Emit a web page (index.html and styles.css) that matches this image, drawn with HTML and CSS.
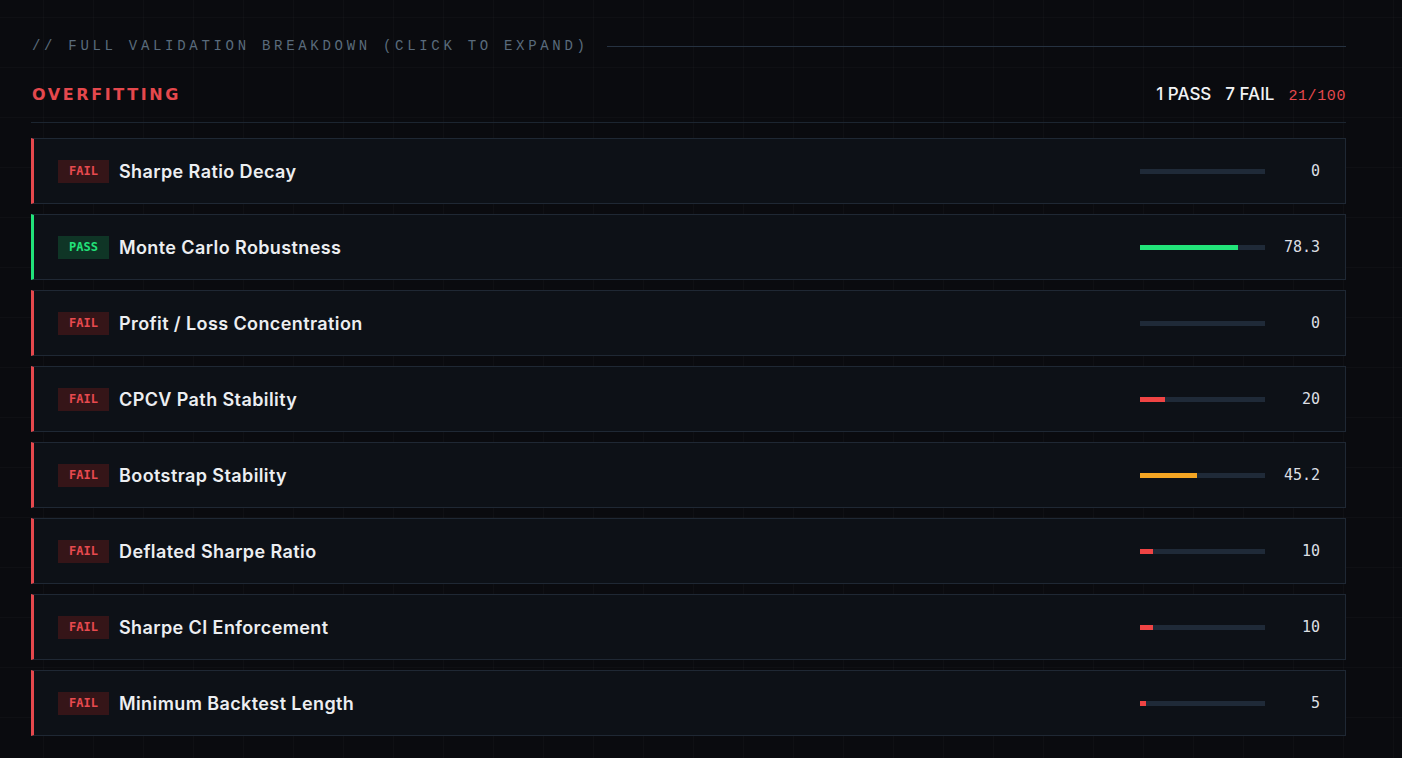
FILE: index.html
```html
<!DOCTYPE html>
<html lang="en">
<head>
    <meta charset="UTF-8">
    <meta name="viewport" content="width=device-width, initial-scale=1.0">
    <title>Validation Breakdown</title>
    <link rel="stylesheet" href="styles.css">
</head>
<body>
    <div class="page">
        <div class="breakdown-title">
            <span>// FULL VALIDATION BREAKDOWN (CLICK TO EXPAND)</span>
            <div class="rule"></div>
        </div>

        <div class="category-head">
            <h2>OVERFITTING</h2>
            <div class="tally">
                <span>1 PASS</span>
                <span>7 FAIL</span>
                <span class="score">21/100</span>
            </div>
        </div>

        <div class="checks">
            <div class="check fail">
                <span class="badge">FAIL</span>
                <span class="name">Sharpe Ratio Decay</span>
                <div class="bar"><div class="fill red" style="width: 0%"></div></div>
                <span class="value">0</span>
            </div>
            <div class="check pass">
                <span class="badge">PASS</span>
                <span class="name">Monte Carlo Robustness</span>
                <div class="bar"><div class="fill green" style="width: 78.3%"></div></div>
                <span class="value">78.3</span>
            </div>
            <div class="check fail">
                <span class="badge">FAIL</span>
                <span class="name">Profit / Loss Concentration</span>
                <div class="bar"><div class="fill red" style="width: 0%"></div></div>
                <span class="value">0</span>
            </div>
            <div class="check fail">
                <span class="badge">FAIL</span>
                <span class="name">CPCV Path Stability</span>
                <div class="bar"><div class="fill red" style="width: 20%"></div></div>
                <span class="value">20</span>
            </div>
            <div class="check fail">
                <span class="badge">FAIL</span>
                <span class="name">Bootstrap Stability</span>
                <div class="bar"><div class="fill amber" style="width: 45.2%"></div></div>
                <span class="value">45.2</span>
            </div>
            <div class="check fail">
                <span class="badge">FAIL</span>
                <span class="name">Deflated Sharpe Ratio</span>
                <div class="bar"><div class="fill red" style="width: 10%"></div></div>
                <span class="value">10</span>
            </div>
            <div class="check fail">
                <span class="badge">FAIL</span>
                <span class="name">Sharpe CI Enforcement</span>
                <div class="bar"><div class="fill red" style="width: 10%"></div></div>
                <span class="value">10</span>
            </div>
            <div class="check fail">
                <span class="badge">FAIL</span>
                <span class="name">Minimum Backtest Length</span>
                <div class="bar"><div class="fill red" style="width: 5%"></div></div>
                <span class="value">5</span>
            </div>
        </div>
    </div>
</body>
</html>
```

FILE: styles.css
```css
body {
    margin: 0;
    padding: 0;
    background-color: #0a0b0f;
    background-image:
        linear-gradient(rgba(255, 255, 255, 0.018) 1px, transparent 1px),
        linear-gradient(90deg, rgba(255, 255, 255, 0.018) 1px, transparent 1px);
    background-size: 50px 50px;
    background-position: 43px 17px;
    color: #e6e8eb;
    font-family: Inter, "Noto Sans", sans-serif;
    min-height: 100vh;
}

.page {
    padding: 36px 56px 20px 31px;
}

.breakdown-title {
    display: flex;
    align-items: center;
    gap: 18px;
    padding-left: 1px;
    font-family: "Liberation Mono", "DejaVu Sans Mono", monospace;
    font-size: 14px;
    letter-spacing: 3.7px;
    color: #5a6b7c;
    height: 20px;
}

.breakdown-title span {
    white-space: nowrap;
}

.breakdown-title .rule {
    flex: 1;
    height: 1px;
    background-color: #263241;
}

.category-head {
    display: flex;
    align-items: center;
    justify-content: space-between;
    margin-top: 28px;
    padding: 0 0 17px 1px;
    border-bottom: 1px solid #1c2530;
}

.category-head h2 {
    margin: 0;
    font-family: "DejaVu Sans", sans-serif;
    font-size: 16px;
    font-weight: bold;
    letter-spacing: 2.6px;
    color: #e5484d;
}

.tally {
    display: flex;
    align-items: baseline;
    gap: 14px;
    font-size: 17px;
    font-weight: 500;
    color: #f2f3f5;
}

.tally .score {
    font-family: "Liberation Mono", monospace;
    font-size: 15px;
    letter-spacing: 0.6px;
    color: #e5484d;
}

.checks {
    display: flex;
    flex-direction: column;
    gap: 10px;
    margin-top: 15px;
}

.check {
    display: flex;
    align-items: center;
    height: 64px;
    padding: 0 25px 0 24px;
    background-color: #0d1117;
    border: 1px solid #1f2834;
    border-left: 3px solid #e5484d;
}

.check.pass {
    border-left-color: #22e27a;
}

.badge {
    width: 51px;
    height: 23px;
    line-height: 23px;
    text-align: center;
    font-family: "DejaVu Sans Mono", monospace;
    font-size: 12px;
    font-weight: bold;
    color: #e84a4f;
    background-color: #351518;
}

.pass .badge {
    color: #22e27a;
    background-color: #0f3526;
}

.name {
    flex: 1;
    margin-left: 10px;
    font-size: 18px;
    font-weight: 600;
    letter-spacing: 0.4px;
    color: #eceef1;
}

.bar {
    width: 125px;
    height: 5px;
    background-color: #1f2a38;
}

.fill {
    height: 100%;
}

.fill.red {
    background-color: #ef4444;
}

.fill.green {
    background-color: #22e57a;
}

.fill.amber {
    background-color: #f5a623;
}

.value {
    width: 55px;
    text-align: right;
    font-family: "DejaVu Sans Mono", monospace;
    font-size: 15px;
    color: #dcdfe3;
}
```
